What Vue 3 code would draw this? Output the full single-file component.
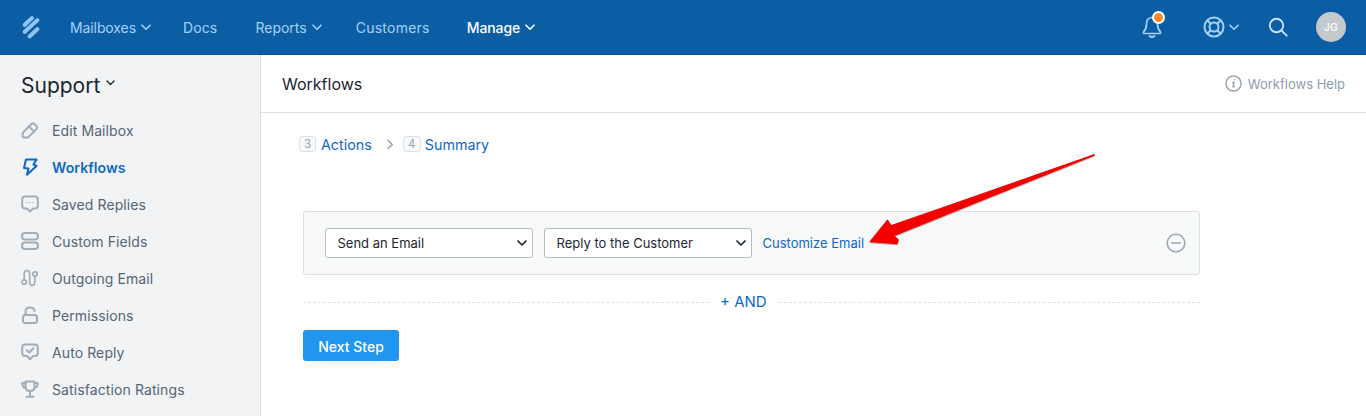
<script setup>
const navItems = [
  { label: 'Mailboxes', caret: true },
  { label: 'Docs', cls: 'nav-docs' },
  { label: 'Reports', caret: true, cls: 'nav-reports' },
  { label: 'Customers', cls: 'nav-customers' },
  { label: 'Manage', caret: true, cls: 'nav-active' }
]
const sideItems = [
  { label: 'Edit Mailbox', icon: 'pencil' },
  { label: 'Workflows', icon: 'bolt', active: true },
  { label: 'Saved Replies', icon: 'chat' },
  { label: 'Custom Fields', icon: 'fields' },
  { label: 'Outgoing Email', icon: 'route' },
  { label: 'Permissions', icon: 'lock' },
  { label: 'Auto Reply', icon: 'check' },
  { label: 'Satisfaction Ratings', icon: 'trophy' }
]
</script>

<template>
  <div class="page">
    <header class="topbar">
      <svg class="logo" width="20" height="24" viewBox="0 0 20 24" fill="none" stroke="#8fc3f2" stroke-width="3.8" stroke-linecap="round">
        <path d="M3.5 10 L11 3"/>
        <path d="M3.5 17 L16.5 5"/>
        <path d="M8.5 21.5 L16.5 14"/>
      </svg>
      <nav class="nav">
        <a v-for="n in navItems" :key="n.label" class="nav-item" :class="n.cls">
          {{ n.label }}
          <svg v-if="n.caret" class="caret" width="10" height="7" viewBox="0 0 10 7"><path d="M1 1.2 L5 5.2 L9 1.2" fill="none" stroke="currentColor" stroke-width="1.6" stroke-linecap="round" stroke-linejoin="round"/></svg>
        </a>
      </nav>
      <div class="top-icons">
        <span class="bell">
          <svg width="24" height="26" viewBox="0 1 24 26" fill="none" stroke="#a4d2f7" stroke-width="1.7" stroke-linecap="round" stroke-linejoin="round">
            <path d="M12 4.5 C7.5 4.5 6.5 8 6.5 11 C6.5 15 5.5 17 3.5 19 Q3 20.5 4.5 20.5 L19.5 20.5 Q21 20.5 20.5 19 C18.5 17 17.5 15 17.5 11 C17.5 8 16.5 4.5 12 4.5 Z"/>
            <path d="M9.5 23 Q12 25 14.5 23"/>
          </svg>
          <i class="dot"></i>
        </span>
        <span class="help">
          <svg width="22" height="22" viewBox="0 0 22 22" fill="none" stroke="#a4d2f7" stroke-width="2">
            <circle cx="11" cy="11" r="9.5"/><circle cx="11" cy="11" r="4.5"/>
            <path d="M4.5 4.5 L8 8 M17.5 4.5 L14 8 M4.5 17.5 L8 14 M17.5 17.5 L14 14"/>
          </svg>
          <svg width="10" height="7" viewBox="0 0 10 7"><path d="M1 1.2 L5 5.2 L9 1.2" fill="none" stroke="#a4d2f7" stroke-width="1.6" stroke-linecap="round" stroke-linejoin="round"/></svg>
        </span>
        <svg class="search" width="20" height="20" viewBox="0 0 20 20" fill="none" stroke="#c3e1f9" stroke-width="1.9" stroke-linecap="round">
          <circle cx="8.5" cy="8.5" r="6.7"/><path d="M13.5 13.5 L18.7 18.7"/>
        </svg>
        <span class="avatar">JG</span>
      </div>
    </header>

    <div class="body">
      <aside class="sidebar">
        <h2 class="side-title">Support
          <svg width="9" height="6" viewBox="0 0 9 6"><path d="M1 1 L4.5 4.5 L8 1" fill="none" stroke="#1b2530" stroke-width="1.4" stroke-linecap="round" stroke-linejoin="round"/></svg>
        </h2>
        <ul class="side-list">
          <li v-for="s in sideItems" :key="s.label" class="side-item" :class="{ 'side-active': s.active }">
            <svg class="side-icon" width="18" height="18" viewBox="0 0 18 18" fill="none" stroke="currentColor" stroke-width="2" stroke-linecap="round" stroke-linejoin="round">
              <template v-if="s.icon === 'pencil'">
                <path d="M2 11.5 L10.5 3 Q12 1.7 13.5 3 L15.5 5 Q16.8 6.5 15.5 8 L7 16.5 L3 16.5 Q1.5 16.5 1.5 15 Z"/><path d="M8 5.5 L13 10.5"/>
              </template>
              <template v-else-if="s.icon === 'bolt'">
                <path d="M5 1.5 L15.5 1.5 L12.5 6.5 L15.5 8 L6 16.8 L7.5 10.5 L3 10 Z"/>
              </template>
              <template v-else-if="s.icon === 'chat'">
                <path d="M4 1.5 L14 1.5 Q16.8 1.5 16.8 4.5 L16.8 10.5 Q16.8 13.5 14 13.5 L12 13.5 L9 16.5 L6 13.5 L4 13.5 Q1.2 13.5 1.2 10.5 L1.2 4.5 Q1.2 1.5 4 1.5 Z"/>
                <path d="M6 7.5 L6 7.6 M9 7.5 L9 7.6 M12 7.5 L12 7.6" stroke-width="1.3"/>
              </template>
              <template v-else-if="s.icon === 'fields'">
                <rect x="1" y="1" width="16" height="6.5" rx="3"/><rect x="1" y="10.5" width="16" height="6.5" rx="3"/>
              </template>
              <template v-else-if="s.icon === 'route'">
                <path d="M3.2 10.5 L3.2 5 Q3.2 1.5 6 1.5 Q8.7 1.5 8.7 5 L8.7 13 Q8.7 16.5 11 16.5 Q13.8 16.5 13.8 13 L13.8 8" stroke-width="1.7"/>
                <circle cx="3.2" cy="13" r="2.2" stroke-width="1.7"/><circle cx="14" cy="5" r="2.2" stroke-width="1.7"/>
              </template>
              <template v-else-if="s.icon === 'lock'">
                <rect x="2" y="9" width="14" height="8" rx="2.5"/><path d="M4.5 9 L4.5 5.5 Q4.5 1.5 9 1.5 Q13 1.5 13.5 5"/>
              </template>
              <template v-else-if="s.icon === 'check'">
                <path d="M4 1.5 L14 1.5 Q16.8 1.5 16.8 4.5 L16.8 10 Q16.8 13 14 13 L12 13 L9 16.3 L6 13 L4 13 Q1.2 13 1.2 10 L1.2 4.5 Q1.2 1.5 4 1.5 Z"/>
                <path d="M5.8 7.3 L8.2 9.5 L12.3 5.3"/>
              </template>
              <template v-else>
                <path d="M4.5 1.5 L13.5 1.5 L13.5 6.5 Q13.5 11 9 11 Q4.5 11 4.5 6.5 Z"/>
                <path d="M4.5 3 L1.2 3 Q1.2 7.5 4.8 8 M13.5 3 L16.8 3 Q16.8 7.5 13.2 8 M9 11 L9 16.5 M5.5 16.7 L12.5 16.7"/>
              </template>
            </svg>
            <span>{{ s.label }}</span>
          </li>
        </ul>
      </aside>

      <main class="main">
        <div class="main-head">
          <h1 class="main-title">Workflows</h1>
          <a class="help-link">
            <svg width="17" height="17" viewBox="0 0 17 17" fill="none" stroke="#9aa8b5" stroke-width="1.5">
              <circle cx="8.5" cy="8.5" r="7.6"/>
              <path d="M9.4 4.7 L9.4 4.8 M7.5 7.6 L9 7.4 L8 11.8 L9.5 11.5" stroke-linecap="round" stroke-linejoin="round"/>
            </svg>
            Workflows Help
          </a>
        </div>
        <div class="content">
          <div class="steps">
            <span class="step-num">3</span><a class="step-link">Actions</a>
            <svg class="step-sep" width="8" height="11" viewBox="0 0 8 11"><path d="M1.5 1 L6.2 5.5 L1.5 10" fill="none" stroke="#9aa8b5" stroke-width="1.6"/></svg>
            <span class="step-num step-four">4</span><a class="step-link">Summary</a>
          </div>
          <div class="action-box">
            <div class="sel">
              <span>Send an Email</span>
              <svg width="10" height="7" viewBox="0 0 10 7"><path d="M1 1 L5 5 L9 1" fill="none" stroke="#1d2730" stroke-width="1.7" stroke-linecap="round" stroke-linejoin="round"/></svg>
            </div>
            <div class="sel">
              <span>Reply to the Customer</span>
              <svg width="10" height="7" viewBox="0 0 10 7"><path d="M1 1 L5 5 L9 1" fill="none" stroke="#1d2730" stroke-width="1.7" stroke-linecap="round" stroke-linejoin="round"/></svg>
            </div>
            <a class="customize">Customize Email</a>
            <svg class="minus" width="20" height="20" viewBox="0 0 20 20" fill="none" stroke="#9aa8b5" stroke-width="1.6">
              <circle cx="10" cy="10" r="8.8"/><path d="M5.8 10 L14.2 10" stroke-linecap="round"/>
            </svg>
          </div>
          <div class="and-row">
            <span class="dash dash-left"></span><a class="and">+ AND</a><span class="dash"></span>
          </div>
          <button class="next">Next Step</button>
        </div>
      </main>
    </div>

    <svg class="arrow" width="240" height="100" viewBox="860 150 240 100">
      <defs>
        <filter id="sh" x="-10%" y="-10%" width="120%" height="130%">
          <feDropShadow dx="0" dy="1" stdDeviation="0.6" flood-color="#000" flood-opacity="0.35"/>
        </filter>
      </defs>
      <path filter="url(#sh)" fill="#f30000" stroke="#f30000" stroke-width="1.5" stroke-linejoin="round"
        d="M1094 155 L891 226 L887.5 220.5 L870.5 241.5 L897 243.5 L898 240 L893.5 235.5 Z"/>
    </svg>
  </div>
</template>

<style>
html, body { margin: 0; padding: 0; background: #fff; overflow: hidden; }
</style>

<style scoped>
.page { position: relative; width: 1366px; height: 416px; overflow: hidden; font-family: Inter, "Liberation Sans", sans-serif; color: #1d2730; }
a { cursor: pointer; }
.topbar { height: 54px; background: #0c5ea4; border-bottom: 1px solid #0a5493; display: flex; align-items: center; padding: 0 20px 0 21px; }
.logo { margin-right: 29px; }
.nav { display: flex; align-items: center; gap: 32px; font-size: 14px; }
.nav-item { color: #a4d2f7; display: flex; align-items: center; gap: 5px; letter-spacing: -0.1px; }
.nav-docs { margin-right: 6px; letter-spacing: 0.15px; }
.nav-reports { margin-right: 2px; letter-spacing: 0; }
.nav-customers { margin-right: 5px; letter-spacing: 0.25px; }
.nav-active { color: #fff; font-weight: 500; }
.top-icons { margin-left: auto; display: flex; align-items: center; }
.bell { position: relative; display: flex; margin-right: 39px; }
.dot { position: absolute; top: -3px; left: 12px; width: 9px; height: 9px; border-radius: 50%; background: #f68b2c; border: 2px solid #fff; }
.help { display: flex; align-items: center; gap: 4px; margin-right: 29px; }
.search { margin-right: 28px; }
.avatar { width: 30px; height: 30px; border-radius: 50%; background: #c4c9ce; color: #fff; font-size: 10.5px; font-weight: 500; display: flex; align-items: center; justify-content: center; letter-spacing: 0.3px; }
.body { display: flex; height: 361px; }
.sidebar { background: #f1f3f5; border-right: 1px solid #d6dde3; flex: none; padding: 17px 0 0 21px; box-sizing: border-box; width: 261px; }
.side-title { margin: 0 0 11.5px; font-size: 21px; line-height: 28px; font-weight: 400; color: #1b2530; display: flex; align-items: flex-start; gap: 6px; }
.side-title svg { margin-top: 8px; }
.side-list { list-style: none; margin: 0; padding: 0; }
.side-item { height: 37px; display: flex; align-items: center; gap: 13px; font-size: 14px; letter-spacing: 0.1px; color: #556575; }
.side-icon { color: #a0aebb; flex: none; }
.side-active { color: #0e68c9; font-weight: 600; }
.side-active .side-icon { color: #0e68c9; }
.main { flex: 1; min-width: 0; }
.main-head { height: 58px; border-bottom: 1px solid #dde2e6; display: flex; align-items: center; justify-content: space-between; padding: 0 21px; box-sizing: border-box; }
.main-title { font-size: 16px; font-weight: 400; margin: 0; color: #1b2530; }
.help-link { display: flex; align-items: center; gap: 6px; font-size: 13px; color: #8d9dad; }
.content { padding: 0 0 0 42px; }
.steps { display: flex; align-items: center; height: 20px; margin: 21px 0 0 -4px; font-size: 14.3px; }
.step-num { width: 15px; height: 14px; border: 1px solid #dbe1e6; background: #f6f8f9; border-radius: 3px; color: #97a5b2; font-size: 11.5px; display: flex; align-items: center; justify-content: center; margin-right: 5px; }
.step-four { width: 16px; margin-right: 4px; }
.step-link { color: #0e68c9; }
.step-sep { margin: 0 9px 0 14px; }
.action-box { width: 897px; height: 64px; box-sizing: border-box; margin-top: 57px; background: #f8f9f9; border: 1px solid #d9dfe4; border-radius: 3px; display: flex; align-items: center; padding: 0 13px 0 20.5px; }
.sel { width: 208.5px; height: 30px; box-sizing: border-box; background: #fff; border: 1px solid #b3bcc6; border-radius: 3px; display: flex; align-items: center; justify-content: space-between; padding: 0 5px 0 12px; font-size: 13px; color: #1d2730; margin-right: 10.5px; flex: none; }
.customize { color: #0e68c9; font-size: 13px; }
.minus { margin-left: auto; }
.and-row { width: 897px; display: flex; align-items: center; margin-top: 17px; height: 20px; }
.dash { flex: 1; border-top: 1px dashed #dfe3e6; }
.dash-left { flex: none; width: 406px; }
.and { color: #0e68c9; font-size: 15px; padding: 0 12px 2px 11px; }
.next { display: block; margin-top: 18px; width: 96px; height: 31px; border: none; border-radius: 3px; background: #2196ee; color: #fff; font: 500 14px Inter, "Liberation Sans", sans-serif; padding: 1px 0 0; }
.arrow { position: absolute; left: 860px; top: 150px; pointer-events: none; }
</style>
